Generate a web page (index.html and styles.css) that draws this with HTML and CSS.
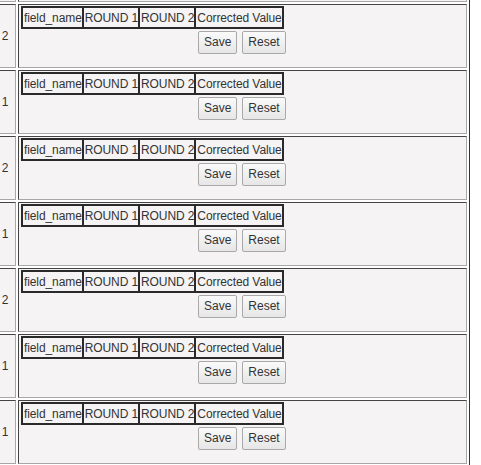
FILE: index.html
```html
<!DOCTYPE html>
<html>
<head>
<meta charset="utf-8">
<link rel="stylesheet" href="styles.css">
</head>
<body>
<table class="outer">
  <tbody>
    <tr>
      <td class="num"></td>
      <td class="main"></td>
    </tr>
    <tr>
      <td class="num">2</td>
      <td class="main">
        <div class="wrap">
          <table class="fields"><tr><td>field_name</td><td>ROUND 1</td><td>ROUND 2</td><td>Corrected Value</td></tr></table>
          <div class="actions"><button class="btn">Save</button><button class="btn">Reset</button></div>
        </div>
      </td>
    </tr>
    <tr>
      <td class="num">1</td>
      <td class="main">
        <div class="wrap">
          <table class="fields"><tr><td>field_name</td><td>ROUND 1</td><td>ROUND 2</td><td>Corrected Value</td></tr></table>
          <div class="actions"><button class="btn">Save</button><button class="btn">Reset</button></div>
        </div>
      </td>
    </tr>
    <tr>
      <td class="num">2</td>
      <td class="main">
        <div class="wrap">
          <table class="fields"><tr><td>field_name</td><td>ROUND 1</td><td>ROUND 2</td><td>Corrected Value</td></tr></table>
          <div class="actions"><button class="btn">Save</button><button class="btn">Reset</button></div>
        </div>
      </td>
    </tr>
    <tr>
      <td class="num">1</td>
      <td class="main">
        <div class="wrap">
          <table class="fields"><tr><td>field_name</td><td>ROUND 1</td><td>ROUND 2</td><td>Corrected Value</td></tr></table>
          <div class="actions"><button class="btn">Save</button><button class="btn">Reset</button></div>
        </div>
      </td>
    </tr>
    <tr>
      <td class="num">2</td>
      <td class="main">
        <div class="wrap">
          <table class="fields"><tr><td>field_name</td><td>ROUND 1</td><td>ROUND 2</td><td>Corrected Value</td></tr></table>
          <div class="actions"><button class="btn">Save</button><button class="btn">Reset</button></div>
        </div>
      </td>
    </tr>
    <tr>
      <td class="num">1</td>
      <td class="main">
        <div class="wrap">
          <table class="fields"><tr><td>field_name</td><td>ROUND 1</td><td>ROUND 2</td><td>Corrected Value</td></tr></table>
          <div class="actions"><button class="btn">Save</button><button class="btn">Reset</button></div>
        </div>
      </td>
    </tr>
    <tr>
      <td class="num">1</td>
      <td class="main">
        <div class="wrap">
          <table class="fields"><tr><td>field_name</td><td>ROUND 1</td><td>ROUND 2</td><td>Corrected Value</td></tr></table>
          <div class="actions"><button class="btn">Save</button><button class="btn">Reset</button></div>
        </div>
      </td>
    </tr>
  </tbody>
</table>
</body>
</html>
```

FILE: styles.css
```css
html, body {
  margin: 0;
  padding: 0;
  background: #ffffff;
}
body {
  font-family: "Liberation Sans", Arial, sans-serif;
  font-size: 12px;
  color: #222;
  overflow: hidden;
}
.outer {
  border-collapse: separate;
  border-spacing: 2px;
  border: 1px solid;
  border-color: #c8c8c8 #333 #333 #c8c8c8;
  margin-left: -11px;
  margin-top: -65px;
  width: 481px;
  table-layout: fixed;
}
.outer > tbody > tr > td {
  box-sizing: border-box;
  border: 1px solid;
  border-color: #444 #a8a8a8 #a8a8a8 #444;
  background: #f5f3f3;
  height: 64px;
}
.num {
  width: 24px;
  text-align: center;
  vertical-align: middle;
  padding: 0 0 0 2px;
  font-size: 12px;
  color: #333;
}
.main {
  vertical-align: top;
  padding: 1px 2px;
}
.wrap {
  display: inline-flex;
  flex-direction: column;
}
.fields {
  border-collapse: separate;
  border-spacing: 0;
  border: 1px solid #2a2a2a;
}
.fields td {
  border: 1px solid #2a2a2a;
  padding: 3px 0 1px 1px;
  line-height: 15px;
  white-space: nowrap;
  color: #333;
  letter-spacing: -0.1px;
}
.actions {
  display: flex;
  justify-content: flex-end;
  gap: 5px;
  margin-top: 2px;
  margin-right: -2px;
}
.btn {
  font-family: "Liberation Sans", Arial, sans-serif;
  font-size: 12px;
  line-height: 15px;
  color: #333;
  padding: 3px 5px;
  border: 1px solid #a9a9a9;
  border-radius: 2px;
  background: linear-gradient(#fafafa, #e6e6e6);
  margin: 0;
}
```
